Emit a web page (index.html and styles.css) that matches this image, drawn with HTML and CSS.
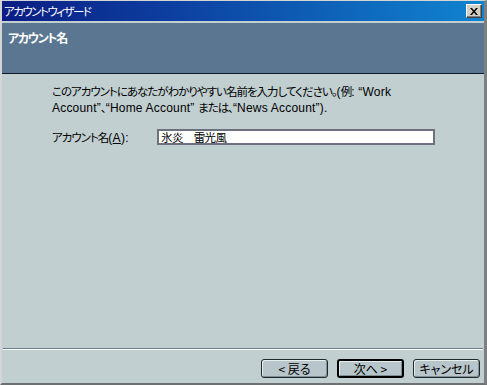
FILE: index.html
```html
<!DOCTYPE html>
<html lang="ja">
<head>
<meta charset="utf-8">
<title>アカウントウィザード</title>
<link rel="stylesheet" href="styles.css">
</head>
<body>
<div class="window">
  <div class="titlebar">
    <span class="title">アカウントウィザード</span>
    <span class="close">
      <svg width="8" height="7" viewBox="0 0 8 7"><path d="M0 0h2l2 2.5L6 0h2L5 3.5 8 7H6L4 4.5 2 7H0l3-3.5z" fill="#000"/></svg>
    </span>
  </div>
  <div class="header">
    <h1 class="header-title">アカウント名</h1>
  </div>
  <div class="content">
    <p class="desc">このアカウントにあなたがわかりやすい名前を入力してください。<span class="latin">(</span>例<span class="latin">: “Work</span><br><span class="latin">Account”</span>、<span class="latin">“Home Account” </span>または、<span class="latin">“News Account”).</span></p>
    <div class="field">
      <label class="label" for="acct">アカウント名<span class="latin">(<u>A</u>):</span></label>
      <input class="input" id="acct" type="text" value="氷炎　雷光風">
    </div>
  </div>
  <div class="footer">
    <div class="sep"></div>
    <div class="buttons">
      <button class="btn">&lt; 戻る</button>
      <button class="btn default">次へ &gt;</button>
      <button class="btn">キャンセル</button>
    </div>
  </div>
</div>
</body>
</html>
```
FILE: styles.css
```css
* { box-sizing: border-box; }
html, body { margin: 0; padding: 0; }
body {
  width: 487px;
  height: 385px;
  overflow: hidden;
  font-family: "Noto Sans CJK JP", "Liberation Sans", sans-serif;
  font-size: 12px;
  color: #000;
}
.window {
  width: 487px;
  height: 385px;
  display: flex;
  flex-direction: column;
  background: #c1cfd0;
  border-left: 2px solid #d4d6d6;
  border-top: 1px solid #d4d6d6;
  border-right: 3px solid #7c8080;
  border-bottom: 2px solid #6c7070;
}
.titlebar {
  height: 20px;
  flex: none;
  display: flex;
  align-items: center;
  justify-content: space-between;
  padding: 0 2px 0 2px;
  background: linear-gradient(to right, #0a1d84 0%, #0d3fa0 35%, #1084d0 100%);
  color: #fff;
}
.title {
  font-size: 11.5px;
  line-height: 14px;
  letter-spacing: -1.5px;
  font-feature-settings: "palt";
}
.close {
  width: 16px;
  height: 14px;
  display: flex;
  align-items: center;
  justify-content: center;
  background: #d4d0c8;
  border: 1px solid;
  border-color: #fff #404040 #404040 #fff;
  box-shadow: inset -1px -1px 0 #808080;
}
.header {
  flex: none;
  height: 51px;
  margin-top: 2px;
  background: #5a7690;
  border-bottom: 1px solid #0c1a2c;
  padding: 8px 0 0 6px;
}
.header-title {
  margin: 0;
  font-size: 12px;
  font-weight: bold;
  line-height: 14px;
  color: #fff;
  letter-spacing: -1.3px;
  font-feature-settings: "palt";
}
.content {
  flex: 1;
  padding: 10px 20px 0 50px;
}
.desc {
  margin: 0;
  white-space: nowrap;
  font-size: 11.5px;
  line-height: 15px;
  font-feature-settings: "palt";
  letter-spacing: -1px;
}
.latin {
  font-family: "Liberation Sans", sans-serif;
  font-size: 12px;
  letter-spacing: 0.2px;
}
.field {
  display: flex;
  align-items: center;
  margin-top: 13px;
}
.label {
  width: 105px;
  flex: none;
  font-size: 11.5px;
  font-feature-settings: "palt";
  letter-spacing: -1px;
}
.label .latin {
  letter-spacing: 0.3px;
}
.input {
  width: 278px;
  height: 16px;
  padding: 0 0 0 2px;
  margin: 0;
  border: 2px solid #6e7080;
  background: #fff;
  font-family: inherit;
  font-size: 11.5px;
  line-height: 12px;
  letter-spacing: -0.6px;
  color: #000;
  outline: none;
}
.footer {
  flex: none;
}
.sep {
  height: 2px;
  border-top: 1px solid #6a7e90;
  border-bottom: 1px solid #fff;
  margin: 0 1px;
}
.buttons {
  display: flex;
  justify-content: flex-end;
  gap: 9px;
  padding: 9px 4px 5px 0;
}
.btn {
  width: 67px;
  height: 19px;
  padding: 0;
  margin: 0;
  border: 1px solid #202830;
  border-radius: 3px;
  background: #b8c6cb;
  box-shadow: inset 1px 1px 0 #e6eeee, inset -1px -1px 0 #7f8f96;
  font-family: inherit;
  font-size: 12px;
  line-height: 15px;
  color: #000;
  font-feature-settings: "palt";
}
.btn.default {
  border: 2px solid #000;
}
```
